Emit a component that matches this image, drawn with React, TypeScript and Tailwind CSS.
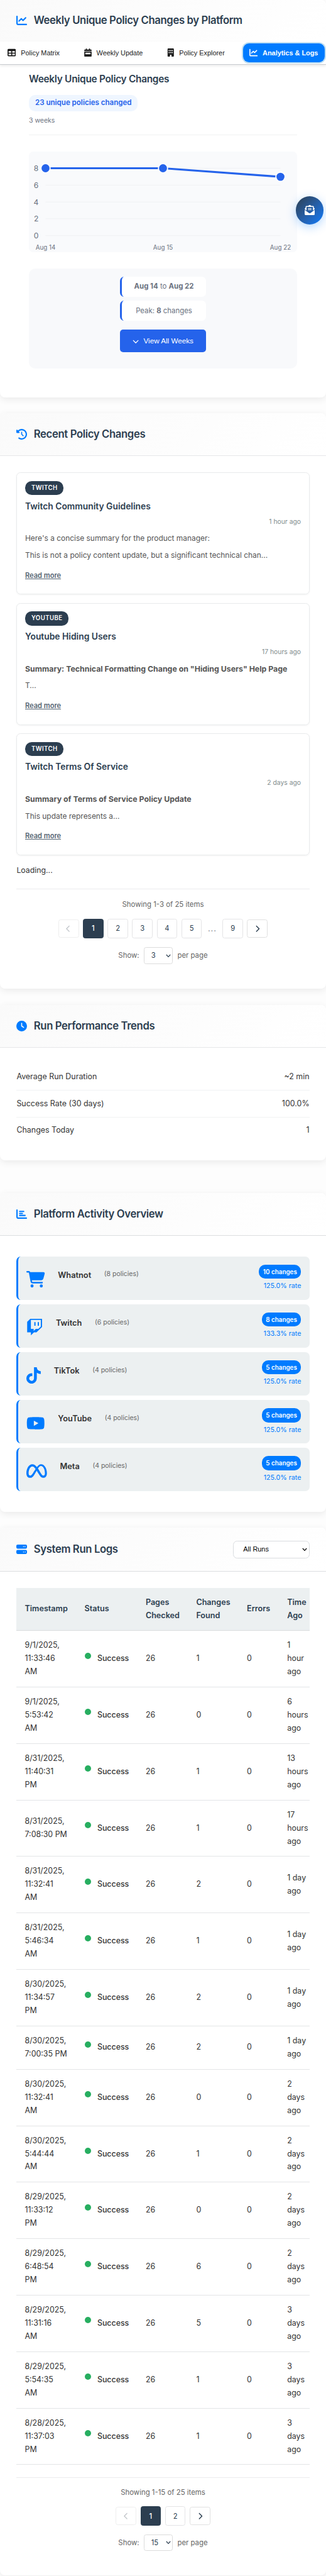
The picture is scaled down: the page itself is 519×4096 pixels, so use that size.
import React from "react";
import {
  FaBuilding,
  FaCalendarWeek,
  FaCartShopping,
  FaChartBar,
  FaChartLine,
  FaChevronDown,
  FaChevronLeft,
  FaChevronRight,
  FaClock,
  FaClockRotateLeft,
  FaEnvelopeOpenText,
  FaMeta,
  FaServer,
  FaTable,
  FaTiktok,
  FaTwitch,
  FaYoutube,
} from "react-icons/fa6";

type Node = React.ReactNode;

function Card({ children, className }: { children: Node; className: string }) {
  return (
    <section
      className={`flex flex-col overflow-hidden rounded-[8px] bg-white shadow-[0_3px_12px_rgba(0,0,0,0.08)] ${className}`}
    >
      {children}
    </section>
  );
}

function Header({ icon, title, className, children }: { icon: Node; title: string; className: string; children?: Node }) {
  return (
    <header className={`flex shrink-0 items-center justify-between bg-linear-135 from-[#fafafa] to-white px-[26.3px] ${className}`}>
      <h2 className="flex items-center gap-[10.5px] whitespace-nowrap text-[16.7px] font-semibold tracking-[-0.37px] text-[#2c3e50]">
        <span className="text-[17px] text-[#007bff]">{icon}</span>
        {title}
      </h2>
      {children}
    </header>
  );
}

function Nav() {
  return (
    <nav className="relative z-10 flex h-[37px] shrink-0 items-center whitespace-nowrap border-b border-[#c9ccd0] bg-white font-['Liberation_Sans',Arial,sans-serif] text-[10.9px] text-[#1a1a1a] shadow-[0_2px_4px_rgba(0,0,0,0.08)]">
      <span className="flex w-[122.2px] items-center pl-[12.2px]">
        <FaTable className="mr-[7.8px] text-[13.3px]" />
        Policy Matrix
      </span>
      <span className="flex w-[132.6px] items-center pl-[11.4px]">
        <FaCalendarWeek className="mr-[8px] h-[13.3px] w-[12px]" />
        Weekly Update
      </span>
      <span className="flex w-[131.8px] items-center pl-[11.2px]">
        <FaBuilding className="mr-[7.6px] h-[13.3px] w-[11.6px]" />
        Policy Explorer
      </span>
      <span className="flex h-[29.6px] w-[130.4px] items-center rounded-[9.5px] bg-[#007bff] pl-[10.4px] font-bold text-white ring-2 ring-[#bfdff3]">
        <FaChartLine className="mr-[7.8px] text-[13.3px]" />
        Analytics &amp; Logs
      </span>
    </nav>
  );
}

const ticks = [
  { label: "8", y: 26.5 },
  { label: "6", y: 53.4 },
  { label: "4", y: 80.2 },
  { label: "2", y: 106.8 },
  { label: "0", y: 133.6 },
];
const points = [
  { label: "Aug 14", x: 26.5, y: 26.5 },
  { label: "Aug 15", x: 213.5, y: 26.5 },
  { label: "Aug 22", x: 400.5, y: 40.1 },
];

function Chart() {
  return (
    <div className="mt-[26.1px] h-[160.1px] shrink-0 rounded-[6.5px] bg-[#f9fafc]">
      <svg width="427" height="160" viewBox="0 0 427 160" className="block overflow-visible" fontFamily="Inter, sans-serif" fill="#6b7280">
        {ticks.map((t) => (
          <g key={t.label}>
            <line x1="26.5" x2="400.5" y1={t.y} y2={t.y} stroke="#f0f1f4" />
            <text x="15.4" y={t.y + 4.5} fontSize="12.2" textAnchor="end">
              {t.label}
            </text>
          </g>
        ))}
        <polyline points="26.5,26.5 213.5,26.5 400.5,40.1" fill="none" stroke="#2563eb" strokeWidth="3.2" />
        {points.map((p) => (
          <g key={p.label}>
            <circle cx={p.x} cy={p.y} r="7.3" fill="#2563eb" stroke="#fff" strokeWidth="1.8" />
            <text x={p.x} y="155.8" fontSize="9.8" textAnchor="middle">
              {p.label}
            </text>
          </g>
        ))}
      </svg>
    </div>
  );
}

const chip =
  "flex h-[31.9px] items-center justify-center rounded-[6.5px] border-l-3 border-[#2563eb] bg-white whitespace-pre text-[11.4px] text-[#6b7280]";

const changes: { platform: string; title: string; time: string; lead: Node; body: string }[] = [
  {
    platform: "TWITCH",
    title: "Twitch Community Guidelines",
    time: "1 hour ago",
    lead: "Here's a concise summary for the product manager:",
    body: "This is not a policy content update, but a significant technical chan...",
  },
  {
    platform: "YOUTUBE",
    title: "Youtube Hiding Users",
    time: "17 hours ago",
    lead: <b className="text-[12.35px]">Summary: Technical Formatting Change on "Hiding Users" Help Page</b>,
    body: "T...",
  },
  {
    platform: "TWITCH",
    title: "Twitch Terms Of Service",
    time: "2 days ago",
    lead: <b className="text-[12.35px]">Summary of Terms of Service Policy Update</b>,
    body: "This update represents a...",
  },
];

function ChangeItem({ c }: { c: (typeof changes)[number] }) {
  return (
    <article className="flex h-[194.1px] flex-col items-start rounded-[6.5px] border border-[#e9ebec] px-[12.6px] pt-[12.7px] whitespace-nowrap shadow-[0_1px_3px_rgba(0,0,0,0.05)]">
      <span className="flex h-[22.6px] items-center rounded-[10.5px] bg-[#2c3e50] pr-[9.6px] pl-[10px] text-[9.65px] font-semibold tracking-[0.41px] text-white">
        {c.platform}
      </span>
      <h3 className="mt-[7.2px] text-[13.84px] leading-[20px] font-semibold text-[#2c3e50]">{c.title}</h3>
      <time className="mt-[6.2px] self-end text-[10.35px] leading-[16px] text-[#7f8c8d]">{c.time}</time>
      <p className="mt-[9.6px] text-[11.95px] leading-[20px] text-[#555]">{c.lead}</p>
      <p className="mt-[6.4px] text-[11.95px] leading-[20px] text-[#555]">{c.body}</p>
      <a className="mt-[13.8px] text-[11.05px] leading-[16px] font-semibold text-[#566573] underline">Read more</a>
    </article>
  );
}

const pageBtn = "flex w-[32.7px] items-center justify-center rounded-[3.5px] border";

function Pager({ showing, pages, size, className, tight }: { showing: string; pages: string[]; size: string; className: string; tight?: boolean }) {
  return (
    <div className={`flex flex-col items-center border-t border-[#ececee] text-[11.4px] text-[#666] ${className}`}>
      <p className="leading-[16px]">{showing}</p>
      <div className={`flex h-[31.1px] items-center gap-[6.5px] text-[11.2px] text-[#2c3e50] ${tight ? "mt-[13.9px]" : "mt-[15.2px]"}`}>
        <span className={`${pageBtn} h-[29px] border-[#eeeeee] text-[#c4c8cc]`}>
          <FaChevronLeft className="text-[11.4px]" />
        </span>
        {pages.map((p) =>
          p === "..." ? (
            <span key={p} className="w-[19.8px] text-center text-[13px] leading-[20px] tracking-[0.8px] text-[#8a8f94]">
              {p}
            </span>
          ) : (
            <span key={p} className={`${pageBtn} h-[31.1px] ${p === "1" ? "border-[#2c3e50] bg-[#2c3e50] font-medium text-white" : "border-[#e4e4e6]"}`}>
              {p}
            </span>
          ),
        )}
        <span className={`${pageBtn} h-[29px] border-[#e0e0e0]`}>
          <FaChevronRight className="text-[11.4px]" />
        </span>
      </div>
      <div className={`flex items-center gap-[7.2px] ${tight ? "mt-[13.4px]" : "mt-[14.5px]"}`}>
        <span>Show:</span>
        <span className="flex h-[26.5px] w-[46.4px] items-center justify-between rounded-[3.5px] border border-[#dcdcdc] pr-[2.4px] pl-[10.8px] text-[11.2px] text-[#2c3e50]">
          {size}
          <Caret />
        </span>
        <span>per page</span>
      </div>
    </div>
  );
}

function Caret() {
  return (
    <svg width="8" height="6" viewBox="0 0 8 6" fill="none" stroke="currentColor" strokeWidth="1.2" className="shrink-0">
      <path d="M.8 1 4 4.4 7.2 1" />
    </svg>
  );
}

const trends = [
  ["Average Run Duration", "~2 min"],
  ["Success Rate (30 days)", "100.0%"],
  ["Changes Today", "1"],
];

const platforms = [
  { icon: <FaCartShopping className="h-[26.2px] w-[29.5px]" />, name: "Whatnot", policies: 8, changes: 10, rate: "125.0%" },
  { icon: <FaTwitch className="h-[26.2px] w-[26.2px]" />, name: "Twitch", policies: 6, changes: 8, rate: "133.3%" },
  { icon: <FaTiktok className="h-[26.2px] w-[22.9px]" />, name: "TikTok", policies: 4, changes: 5, rate: "125.0%" },
  { icon: <FaYoutube className="h-[26.2px] w-[29.5px]" />, name: "YouTube", policies: 4, changes: 5, rate: "125.0%" },
  { icon: <FaMeta className="h-[26.2px] w-[32.7px]" />, name: "Meta", policies: 4, changes: 5, rate: "125.0%" },
];

const runs: [string[], number, string[]][] = [
  [["9/1/2025,", "11:33:46", "AM"], 1, ["1", "hour", "ago"]],
  [["9/1/2025,", "5:53:42", "AM"], 0, ["6", "hours", "ago"]],
  [["8/31/2025,", "11:40:31", "PM"], 1, ["13", "hours", "ago"]],
  [["8/31/2025,", "7:08:30 PM"], 1, ["17", "hours", "ago"]],
  [["8/31/2025,", "11:32:41", "AM"], 2, ["1 day", "ago"]],
  [["8/31/2025,", "5:46:34", "AM"], 1, ["1 day", "ago"]],
  [["8/30/2025,", "11:34:57", "PM"], 2, ["1 day", "ago"]],
  [["8/30/2025,", "7:00:35 PM"], 2, ["1 day", "ago"]],
  [["8/30/2025,", "11:32:41", "AM"], 0, ["2", "days", "ago"]],
  [["8/30/2025,", "5:44:44", "AM"], 1, ["2", "days", "ago"]],
  [["8/29/2025,", "11:33:12", "PM"], 0, ["2", "days", "ago"]],
  [["8/29/2025,", "6:48:54", "PM"], 6, ["2", "days", "ago"]],
  [["8/29/2025,", "11:31:16", "AM"], 5, ["3", "days", "ago"]],
  [["8/29/2025,", "5:54:35", "AM"], 1, ["3", "days", "ago"]],
  [["8/28/2025,", "11:37:03", "PM"], 1, ["3", "days", "ago"]],
];

const cols = "grid grid-cols-[95.1px_97.3px_80.5px_80.7px_64.2px_48.2px] items-center whitespace-nowrap leading-[20.93px] *:pl-[13.1px]";

function Lines({ lines }: { lines: string[] }) {
  return (
    <div>
      {lines.map((l) => (
        <div key={l}>{l}</div>
      ))}
    </div>
  );
}

export default function App() {
  return (
    <div className="relative h-[4096px] w-[519px] overflow-hidden bg-[#fdfdfd] font-[Inter,'Liberation_Sans',sans-serif] text-[#333]">
      <Card className="h-[631.5px]">
        <Header icon={<FaChartLine />} title="Weekly Unique Policy Changes by Platform" className="h-[65.8px]" />
        <Nav />
        <div className="flex flex-col items-stretch px-[46px] pt-[11.4px]">
          <h3 className="text-[15.4px] leading-[24px] font-semibold tracking-[-0.27px] text-[#2c3e50]">Weekly Unique Policy Changes</h3>
          <span className="mt-[13.1px] flex h-[25.4px] items-center self-start rounded-[10px] bg-[#eff6ff] px-[10px] text-[11.56px] font-semibold text-[#2563eb]">
            23 unique policies changed
          </span>
          <p className="mt-[7.8px] text-[10.5px] leading-[16px] text-[#6b7280]">3 weeks</p>
          <hr className="mt-[13.7px] border-[#f0f1f3]" />
          <Chart />
          <div className="mt-[25.6px] flex h-[158.7px] flex-col items-center rounded-[10px] bg-[#f8f9fb] pt-[12.8px]">
            <div className="flex w-[137px] flex-col">
              <div className={chip}>
                <b>Aug 14</b> to <b>Aug 22</b>
              </div>
              <div className={`mt-[6.8px] ${chip}`}>
                Peak: <b>8</b> changes
              </div>
              <button className="mt-[13.3px] flex h-[36px] items-center justify-center gap-[7.2px] rounded-[5px] bg-[#2563eb] font-['Liberation_Sans',Arial,sans-serif] text-[11.7px] text-white">
                <FaChevronDown className="mt-[2px] h-[11.4px] w-[10.2px]" />
                View All Weeks
              </button>
            </div>
          </div>
        </div>
      </Card>

      <Card className="mt-[25.9px] h-[914.8px]">
        <Header icon={<FaClockRotateLeft />} title="Recent Policy Changes" className="h-[68px] border-b-[1.6px] border-[#e6e7e9]" />
        <div className="flex flex-col px-[26.4px] pt-[25.8px]">
          <div className="flex flex-col gap-[13.25px]">
            {changes.map((c) => (
              <ChangeItem key={c.title} c={c} />
            ))}
          </div>
          <p className="mt-[14px] text-[12.3px] leading-[20px]">Loading...</p>
          <Pager className="mt-[19.3px] pt-[15.4px]" showing="Showing 1-3 of 25 items" pages={["1", "2", "3", "4", "5", "...", "9"]} size="3" />
        </div>
      </Card>

      <Card className="mt-[25.9px] h-[247.3px]">
        <Header icon={<FaClock />} title="Run Performance Trends" className="h-[68px] border-b-[1.6px] border-[#e6e7e9]" />
        <div className="px-[26.4px] pt-[25.8px] text-[12.45px]">
          {trends.map(([k, v]) => (
            <div key={k} className="flex h-[42.55px] items-center justify-between border-b border-[#f1f2f3] last:border-transparent">
              <span>{k}</span>
              <span>{v}</span>
            </div>
          ))}
        </div>
      </Card>

      <Card className="mt-[52.1px] h-[506.6px]">
        <Header icon={<FaChartBar />} title="Platform Activity Overview" className="h-[67.3px] border-b border-[#dcdee0]" />
        <div className="flex flex-col gap-[6.8px] px-[26.4px] pt-[32.8px]">
          {platforms.map((p) => (
            <div key={p.name} className="flex h-[69.3px] items-start rounded-[7px] border-l-[3.3px] border-[#007bff] bg-[#ecf0f1] pr-[13.2px] pl-[13.1px]">
              <span className="mt-[23.8px] mr-[20.3px] text-[#007bff]">{p.icon}</span>
              <span className="mt-[20.5px] mr-[20.6px] text-[12.8px] leading-[20px] font-semibold">{p.name}</span>
              <span className="mt-[20.9px] text-[10.48px] leading-[16px] text-[#666]">({p.policies} policies)</span>
              <div className="mt-[13px] ml-auto flex flex-col items-end">
                <span className="flex h-[22.7px] items-center rounded-[10px] bg-[#007bff] px-[6.6px] text-[9.85px] font-semibold text-white">
                  {p.changes} changes
                </span>
                <span className="mt-[4px] text-[10.7px] leading-[16px] text-[#007bff]">{p.rate} rate</span>
              </div>
            </div>
          ))}
        </div>
      </Card>

      <Card className="mt-[25.3px] h-[1665.8px]">
        <Header icon={<FaServer />} title="System Run Logs" className="h-[69.4px] border-b border-[#dcdee0]">
          <span className="flex h-[28px] w-[122px] items-center justify-between rounded-[6.5px] border border-[#dadde0] bg-white pr-[2.6px] pl-[15.6px] font-['Liberation_Sans',Arial,sans-serif] text-[10.9px] text-black">
            All Runs
            <Caret />
          </span>
        </Header>
        <div className="flex flex-col px-[26.4px] pt-[26.4px]">
          <div className="overflow-hidden text-[12.4px]">
            <div className={`${cols} h-[68.1px] border-b border-[#d9dcde] bg-[#ecf0f1] text-[12.6px] font-semibold text-[#2c3e50]`}>
              <div>Timestamp</div>
              <div>Status</div>
              <Lines lines={["Pages", "Checked"]} />
              <Lines lines={["Changes", "Found"]} />
              <div>Errors</div>
              <Lines lines={["Time", "Ago"]} />
            </div>
            {runs.map(([stamp, found, ago]) => (
              <div key={stamp.join()} className={`${cols} border-b border-[#e3e5e7] py-[13px]`}>
                <Lines lines={stamp} />
                <div className="flex items-center font-medium">
                  <span className="mr-[10.3px] mb-[10px] size-[10px] rounded-full bg-[#27ae60]" />
                  Success
                </div>
                <div>26</div>
                <div>{found}</div>
                <div>0</div>
                <Lines lines={ago} />
              </div>
            ))}
          </div>
          <Pager className="mt-[19.9px] pt-[15.1px]" showing="Showing 1-15 of 25 items" pages={["1", "2"]} size="15" tight />
        </div>
      </Card>

      <button className="absolute top-[311.8px] left-[470.6px] z-20 flex size-[44.9px] items-center justify-center rounded-full bg-linear-135 from-[#2c3e50] to-[#007bff] text-white shadow-[0_4px_16px_rgba(0,123,255,0.3)]">
        <FaEnvelopeOpenText className="text-[16.2px]" />
      </button>
    </div>
  );
}
